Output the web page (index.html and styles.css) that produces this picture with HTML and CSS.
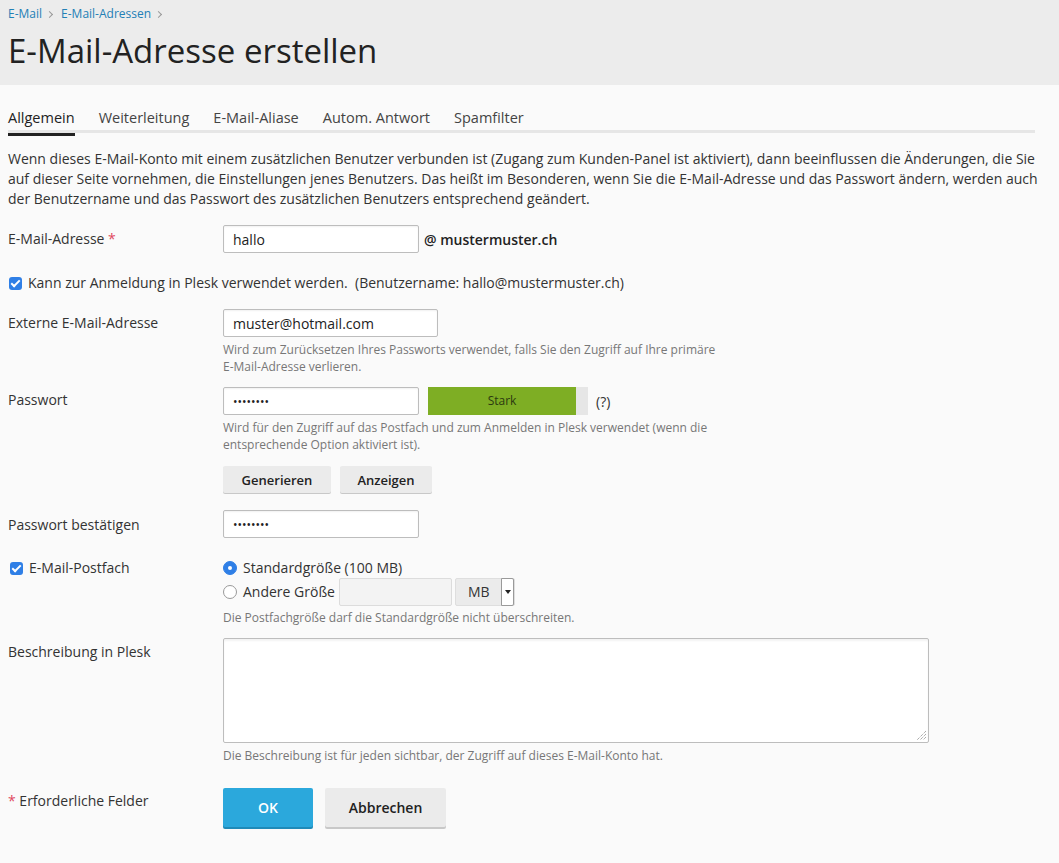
FILE: index.html
```html
<!DOCTYPE html>
<html lang="de">
<head>
<meta charset="utf-8">
<title>E-Mail-Adresse erstellen</title>
<link rel="stylesheet" href="styles.css">
</head>
<body>
<header class="page-header">
  <nav class="breadcrumbs">
    <a href="#">E-Mail</a><span class="sep"></span><a href="#">E-Mail-Adressen</a><span class="sep"></span>
  </nav>
  <h1 class="title">E-Mail-Adresse erstellen</h1>
</header>
<main class="content">
  <ul class="tabs">
    <li class="tab active">Allgemein</li>
    <li class="tab">Weiterleitung</li>
    <li class="tab">E-Mail-Aliase</li>
    <li class="tab">Autom. Antwort</li>
    <li class="tab">Spamfilter</li>
  </ul>
  <p class="intro">Wenn dieses E-Mail-Konto mit einem zusätzlichen Benutzer verbunden ist (Zugang zum Kunden-Panel ist aktiviert), dann beeinflussen die Änderungen, die Sie auf dieser Seite vornehmen, die Einstellungen jenes Benutzers. Das heißt im Besonderen, wenn Sie die E-Mail-Adresse und das Passwort ändern, werden auch der Benutzername und das Passwort des zusätzlichen Benutzers entsprechend geändert.</p>

  <div class="row row-email">
    <div class="label">E-Mail-Adresse <span class="req">*</span></div>
    <div class="field inline">
      <input class="input w195" type="text" value="hallo">
      <span class="domain">@ mustermuster.ch</span>
    </div>
  </div>

  <div class="row row-check">
    <label class="check"><span class="cb"></span>Kann zur Anmeldung in Plesk verwendet werden.&nbsp; (Benutzername: hallo@mustermuster.ch)</label>
  </div>

  <div class="row row-ext">
    <div class="label">Externe E-Mail-Adresse</div>
    <div class="field">
      <input class="input w214" type="text" value="muster@hotmail.com">
      <div class="hint">Wird zum Zurücksetzen Ihres Passworts verwendet, falls Sie den Zugriff auf Ihre primäre<br>E-Mail-Adresse verlieren.</div>
    </div>
  </div>

  <div class="row row-pw">
    <div class="label">Passwort</div>
    <div class="field">
      <div class="inline">
        <input class="input w195 pw" type="text" value="••••••••">
        <div class="strength"><div class="strength-fill">Stark</div></div>
        <span class="qmark">(?)</span>
      </div>
      <div class="hint">Wird für den Zugriff auf das Postfach und zum Anmelden in Plesk verwendet (wenn die<br>entsprechende Option aktiviert ist).</div>
      <div class="btns">
        <button class="btn small gen">Generieren</button>
        <button class="btn small">Anzeigen</button>
      </div>
    </div>
  </div>

  <div class="row row-pw2">
    <div class="label">Passwort bestätigen</div>
    <div class="field">
      <input class="input w195 pw" type="text" value="••••••••">
    </div>
  </div>

  <div class="row row-box">
    <div class="label"><label class="check"><span class="cb"></span>E-Mail-Postfach</label></div>
    <div class="field">
      <div class="radio-line"><span class="radio on"></span>Standardgröße (100 MB)</div>
      <div class="radio-line"><span class="radio"></span>Andere Größe
        <span class="size-input"></span>
        <span class="select">MB<span class="caret"></span></span>
      </div>
      <div class="hint">Die Postfachgröße darf die Standardgröße nicht überschreiten.</div>
    </div>
  </div>

  <div class="row row-desc">
    <div class="label">Beschreibung in Plesk</div>
    <div class="field">
      <div class="textarea">
        <svg class="grip" width="12" height="12" viewBox="0 0 12 12"><path d="M11 2L2 11M11 5L5 11M11 8L8 11" stroke="#888" stroke-width="1" stroke-dasharray="1 1"/></svg>
      </div>
      <div class="hint">Die Beschreibung ist für jeden sichtbar, der Zugriff auf dieses E-Mail-Konto hat.</div>
    </div>
  </div>

  <div class="row row-foot">
    <div class="label"><span class="req">*</span> Erforderliche Felder</div>
    <div class="field inline btns-foot">
      <button class="btn primary">OK</button>
      <button class="btn big">Abbrechen</button>
    </div>
  </div>
</main>
</body>
</html>
```

FILE: styles.css
```css
* { box-sizing: border-box; }
html, body { margin: 0; padding: 0; }
body {
  font-family: "Open Sans", "Noto Sans", sans-serif;
  font-size: 14px;
  color: #333;
  background: #fafafa;
  width: 1059px;
  min-height: 863px;
}
.page-header {
  background: #ececec;
  height: 85px;
  padding: 6px 8px 0;
}
.breadcrumbs {
  font-size: 12px;
  line-height: 16px;
  color: #999;
  display: flex;
  align-items: center;
}
.breadcrumbs a { color: #2380b6; text-decoration: none; }
.breadcrumbs .sep {
  width: 5px; height: 5px;
  border-right: 1px solid #999;
  border-top: 1px solid #999;
  transform: rotate(45deg);
  margin: 0 9px 0 5px;
}
.title {
  margin: 8px 0 0;
  font-size: 33px;
  line-height: 42px;
  font-weight: 400;
  color: #222;
}
.content { padding: 0 16px 0 8px; }
.tabs {
  list-style: none;
  margin: 23px 0 0;
  padding: 0;
  display: flex;
  gap: 24px;
  border-bottom: 3px solid #e6e6e6;
  width: 1027px;
  height: 25px;
}
.tab {
  font-size: 14.5px;
  line-height: 18px;
  color: #444;
  padding-top: 1px;
  height: 25px;
}
.tab.active {
  color: #222;
  font-weight: 500;
  border-bottom: 3px solid #222;
  height: 28px;
  margin-bottom: -3px;
}
.intro {
  margin: 16px 0 0;
  line-height: 20px;
  font-size: 14px;
  color: #333;
}
.row { display: flex; }
.label { width: 215px; flex: none; line-height: 20px; color: #333; }
.field { flex: none; }
.inline { display: flex; align-items: center; }
.req { color: #e0485f; }
.input {
  font-family: inherit;
  font-size: 14px;
  color: #222;
  height: 28px;
  border: 1px solid #bdbdbd;
  border-radius: 2px;
  background: #fff;
  padding: 0 9px;
  box-shadow: inset 0 1px 2px rgba(0,0,0,0.06);
  outline: none;
}
.w195 { width: 196px; }
.w214 { width: 215px; }
.pw { font-size: 12px; letter-spacing: 0; }
.domain { margin-left: 5px; font-weight: 600; color: #222; }
.row-email { margin-top: 16px; }
.row-email .label { padding-top: 4px; }
.row-check { margin-top: 20px; }
.check { display: flex; align-items: center; line-height: 20px; }
.cb {
  width: 13px; height: 13px;
  border-radius: 3px;
  background: #2f7fe6;
  margin: 0 6px 0 1px;
  position: relative;
  flex: none;
}
.cb::after {
  content: "";
  position: absolute;
  left: 4px; top: 1.5px;
  width: 3px; height: 7px;
  border: solid #fff;
  border-width: 0 2px 2px 0;
  transform: rotate(45deg);
}
.row-ext { margin-top: 16px; }
.row-ext .label { padding-top: 4px; }
.hint {
  font-size: 12px;
  line-height: 17px;
  color: #777;
  margin-top: 4px;
}
.row-pw { margin-top: 12px; }
.row-pw .label { padding-top: 3px; }
.strength {
  width: 160px;
  height: 28px;
  background: #e6e6e6;
  margin-left: 9px;
}
.strength-fill {
  width: 148px;
  height: 28px;
  background: #7eae24;
  color: #2c3a10;
  font-size: 12px;
  line-height: 28px;
  text-align: center;
}
.qmark { margin-left: 8px; font-size: 14px; color: #333; }
.btns { display: flex; gap: 9px; margin-top: 13px; }
.btn {
  font-family: inherit;
  border: none;
  border-radius: 2px;
  background: #ebebeb;
  color: #222;
  box-shadow: 0 1px 0 #c8c8c8;
  cursor: pointer;
}
.btn.small {
  font-size: 13px;
  font-weight: 600;
  height: 27px;
  padding: 0;
  width: 92px;
}
.btn.small.gen { width: 108px; }
.row-pw2 { margin-top: 17px; }
.row-pw2 .label { padding-top: 5px; }
.row-box { margin-top: 20px; }
.row-box .label .check { margin-left: 1px; }
.radio-line { display: flex; align-items: center; line-height: 20px; height: 20px; }
.radio-line + .radio-line { height: 28px; }
.radio {
  width: 14px; height: 14px;
  border-radius: 50%;
  border: 1px solid #999;
  background: #fff;
  margin-right: 6px;
  flex: none;
  position: relative;
}
.radio.on { background: #2f7fe6; border-color: #2f7fe6; }
.radio.on::after {
  content: "";
  position: absolute;
  left: 4px; top: 4px;
  width: 4px; height: 4px;
  border-radius: 50%;
  background: #fff;
}
.size-input {
  width: 113px; height: 28px;
  border: 1px solid #dcdcdc;
  background: #f3f3f3;
  margin-left: 4px;
  border-radius: 2px;
}
.select {
  display: flex;
  align-items: center;
  width: 60px; height: 28px;
  margin-left: 3px;
  background: #ebebeb;
  border: 1px solid #dedede;
  border-radius: 2px;
  padding-left: 12px;
  position: relative;
  color: #333;
}
.caret {
  position: absolute;
  right: 0; top: -1px;
  width: 13px; height: 28px;
  background: #fff;
  border: 1px solid #9a9a9a;
  border-radius: 0 2px 2px 0;
}
.caret::after {
  content: "";
  position: absolute;
  left: 3px; top: 11px;
  border-left: 3px solid transparent;
  border-right: 3px solid transparent;
  border-top: 4px solid #222;
}
.row-box .hint { margin-top: 3px; }
.row-desc { margin-top: 12px; }
.row-desc .label { padding-top: 4px; }
.textarea {
  width: 706px; height: 105px;
  background: #fff;
  border: 1px solid #bdbdbd;
  border-radius: 2px;
  box-shadow: inset 0 2px 2px rgba(0,0,0,0.05);
  position: relative;
}
.grip { position: absolute; right: 1px; bottom: 1px; }
.row-desc .hint { margin-top: 4px; }
.row-foot { margin-top: 24px; }
.row-foot .label { padding-top: 3px; }
.btns-foot { gap: 12px; align-items: flex-start; }
.btn.primary {
  width: 90px; height: 39px;
  background: #2ba8dc;
  color: #fff;
  font-size: 14px;
  font-weight: 600;
  box-shadow: 0 2px 0 #1f8ab8;
}
.btn.big {
  width: 121px; height: 39px;
  font-size: 14px;
  font-weight: 600;
  box-shadow: 0 2px 0 #c8c8c8;
}
```
